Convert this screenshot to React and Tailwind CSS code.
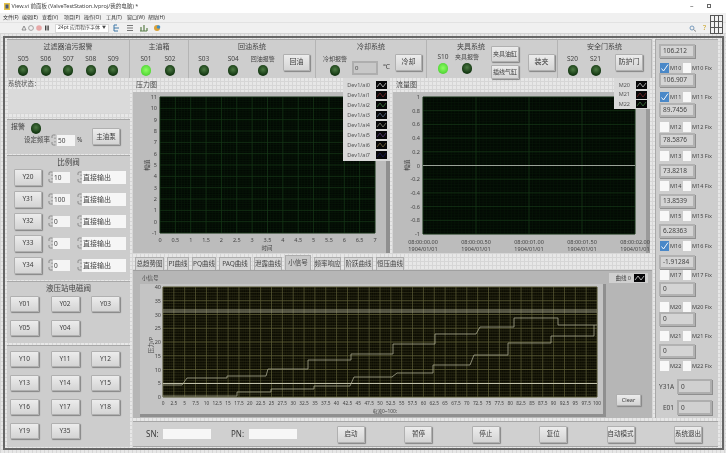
const R = (a, b, s = 1) => { const o = []; for (let i = 0; ; i++) { const v = a + i * s; if (v > b + 1e-6) break; o.push(v); } return o; };

const btn = "flex items-center justify-center shrink-0 rounded-[1px] border border-[#b0b0b0] bg-gradient-to-b from-[#ececec] to-[#d4d4d4] text-[#3a3a3a] shadow-[1px_1px_1px_#858585]";

function Btn({ children, cls = "w-[28px] h-[17px] text-[7px]" }) {
  return <div className={`${btn} ${cls}`}>{children}</div>;
}

function Led({ on }) {
  return on
    ? <div className="w-[10px] h-[11px] rounded-full bg-[radial-gradient(circle_at_50%_45%,#8dff62,#4fd334_75%)]" />
    : <div className="w-[10px] h-[11px] rounded-full bg-[radial-gradient(circle_at_50%_40%,#4d7a44,#163a14_65%,#0f2a0e)]" />;
}

function Cell({ label, on, w }) {
  return (
    <div className={`flex flex-col items-center shrink-0 ${w}`}>
      <div className={`h-[12px] leading-[12px] text-[#444] whitespace-nowrap ${label.startsWith("S") ? "text-[6.5px]" : "text-[6px]"}`}>{label}</div>
      <Led on={on} />
    </div>
  );
}

function Group({ title, w, children }) {
  return (
    <div className={`${w} shrink-0 h-full bg-[#cecece] border-t border-[#a8a8a8] border-r border-r-[#b4b4b4] flex flex-col`}>
      <div className="h-[13px] text-[7px] leading-[13px] text-center text-[#444]">{title}</div>
      <div className="flex items-start">{children}</div>
    </div>
  );
}

function Spin() {
  return (
    <svg width="5" height="12" viewBox="0 0 5 12" className="shrink-0">
      <path d="M1 4 V2 Q1 1 2.5 1 H4.5 M1 8 V10 Q1 11 2.5 11 H4.5 M4 3.5 V5 M4 7 V8.5" stroke="#8a8a8a" fill="none" strokeWidth="1" />
    </svg>
  );
}

function ValveRow({ name, val }) {
  return (
    <div className="flex items-center h-[22px] pl-[7px]">
      <Btn cls="w-[28px] h-[17px] text-[6.5px]">{name}</Btn>
      <div className="ml-[6px]"><Spin /></div>
      <div className="w-[17px] h-[11px] bg-[#f4f4f4] text-[6.5px] leading-[11px] pl-[1px] text-[#444]">{val}</div>
      <div className="ml-[7px]"><Spin /></div>
      <div className="w-[44px] h-[13px] bg-[#f6f6f6] text-[7px] leading-[13px] pl-[1px] text-[#444]">直接输出</div>
    </div>
  );
}

function LeftColumn() {
  const b = "w-[29px] h-[16px] text-[6.5px]";
  const row = "flex gap-[11.5px] pl-[3px]";
  return (
    <div className="row-span-2 flex flex-col h-full">
      <div className="h-[41px] shrink-0 pl-[1px]">
        <div className="h-[10px] mt-[1px] text-[6.5px] leading-[10px] text-[#555]">系统状态：</div>
        <div className="h-[24px] w-[122px] bg-[#dadada]" />
      </div>
      <div className="h-[35px] shrink-0 bg-[#cdcdcd] border-t border-[#a8a8a8] flex flex-col relative">
        <div className="flex items-center pl-[4px] pt-[1px] h-[14px]">
          <span className="text-[7px] text-[#444] w-[20px]">报警</span>
          <div className="mt-[1px]"><Led /></div>
        </div>
        <div className="flex items-center pl-[17px]">
          <span className="text-[6.5px] text-[#444] w-[27px] whitespace-nowrap">设定频率</span>
          <Spin />
          <div className="w-[18px] h-[11px] ml-[1px] bg-[#f4f4f4] text-[6.5px] leading-[11px] pl-[1px] text-[#444]">50</div>
          <span className="text-[6.5px] text-[#444] ml-[2px]">%</span>
        </div>
        <div className="absolute left-[85px] top-[8px]"><Btn cls="w-[28px] h-[17px] text-[6.5px]">主油泵</Btn></div>
      </div>
      <div className="h-[125px] mt-[1px] shrink-0 bg-[#cdcdcd] border-t border-[#a8a8a8] flex flex-col">
        <div className="h-[10px] text-[7.5px] leading-[13px] text-center text-[#444]">比例阀</div>
        {[["Y20", "10"], ["Y31", "100"], ["Y32", "0"], ["Y33", "0"], ["Y34", "0"]].map(([n, v]) => <ValveRow key={n} name={n} val={v} />)}
      </div>
      <div className="h-[62px] mt-[1px] shrink-0 bg-[#cdcdcd] border-t border-[#a8a8a8] flex flex-col">
        <div className="h-[14px] text-[7.5px] leading-[12px] text-center text-[#444]">液压站电磁阀</div>
        <div className={row}><Btn cls={b}>Y01</Btn><Btn cls={b}>Y02</Btn><Btn cls={b}>Y03</Btn></div>
        <div className={`${row} mt-[8px]`}><Btn cls={b}>Y05</Btn><Btn cls={b}>Y04</Btn></div>
      </div>
      <div className="flex-1 mt-[2px] bg-[#cdcdcd] border-t border-[#a8a8a8] flex flex-col gap-[8px] pt-[5px]">
        <div className={row}><Btn cls={b}>Y10</Btn><Btn cls={b}>Y11</Btn><Btn cls={b}>Y12</Btn></div>
        <div className={row}><Btn cls={b}>Y13</Btn><Btn cls={b}>Y14</Btn><Btn cls={b}>Y15</Btn></div>
        <div className={row}><Btn cls={b}>Y16</Btn><Btn cls={b}>Y17</Btn><Btn cls={b}>Y18</Btn></div>
        <div className={row}><Btn cls={b}>Y19</Btn><Btn cls={b}>Y35</Btn></div>
      </div>
    </div>
  );
}

function TopBar() {
  return (
    <div className="col-span-2 flex h-full items-stretch">
      <Group title="过滤器油污报警" w="w-[123px]">
        <div className="flex pl-[5px]">
          {["S05", "S06", "S07", "S08", "S09"].map(s => <Cell key={s} label={s} w="w-[22.5px]" />)}
        </div>
      </Group>
      <Group title="主油箱" w="w-[59px]">
        <div className="flex pl-[4px]">
          <Cell label="S01" on w="w-[24px]" />
          <Cell label="S02" w="w-[24px]" />
        </div>
      </Group>
      <Group title="回油系统" w="w-[127px]">
        <Cell label="S03" w="w-[29.5px]" />
        <Cell label="S04" w="w-[29.5px]" />
        <Cell label="回油报警" w="w-[29.5px]" />
        <div className="ml-[5.5px] mt-[1px]"><Btn cls="w-[27px] h-[17px] text-[7px]">回油</Btn></div>
      </Group>
      <Group title="冷却系统" w="w-[111px]">
        <div className="pl-[5px]"><Cell label="冷却报警" w="w-[28px]" /></div>
        <div className="ml-[3px] mt-[8px] w-[26px] h-[14px] bg-[#c8c8c8] border-2 border-[#aeaeae] text-[6px] leading-[10px] pl-[1px] text-[#444]">0</div>
        <div className="w-[17px] mt-[9px] text-[7px] text-center text-[#444]">℃</div>
        <div className="mt-[1px]"><Btn cls="w-[27px] h-[17px] text-[7px]">冷却</Btn></div>
      </Group>
      <div className="w-[131px] shrink-0 h-full bg-[#cecece] border-t border-[#a8a8a8] border-r border-r-[#b4b4b4] flex">
        <div className="w-[64px] shrink-0 flex flex-col">
          <div className="h-[11px] pl-[30px] text-[7px] leading-[13px] text-[#444] whitespace-nowrap">夹具系统</div>
          <div className="flex pl-[4px]">
            <Cell label="S10" on w="w-[24px]" />
            <Cell label="夹具报警" w="w-[24px]" />
          </div>
        </div>
        <div className="flex flex-col gap-[3px] pt-[6px] w-[28px] shrink-0">
          <Btn cls="w-[28px] h-[16px] text-[6px]">夹具油缸</Btn>
          <Btn cls="w-[28px] h-[14px] text-[6px]">插线气缸</Btn>
        </div>
        <div className="ml-[9px] mt-[14px]"><Btn cls="w-[27px] h-[17px] text-[7px]">装夹</Btn></div>
      </div>
      <Group title="安全门系统" w="w-[94px]">
        <div className="flex pl-[3px]">
          <Cell label="S20" w="w-[23px]" />
          <Cell label="S21" w="w-[23px]" />
        </div>
        <div className="ml-[8px] mt-[1px]"><Btn cls="w-[28px] h-[17px] text-[7px]">防护门</Btn></div>
      </Group>
    </div>
  );
}

function Wave({ color }) {
  return (
    <svg width="11" height="8" viewBox="0 0 11 8" className="shrink-0">
      <rect width="11" height="8" fill="#060608" />
      <path d="M1 6 L4 2 L7 6 L10 2" stroke={color} strokeWidth="0.8" fill="none" />
    </svg>
  );
}

function Legend({ items, cls, rowCls }) {
  return (
    <div className={`absolute top-0 bg-[#d9d9d9] flex flex-col pt-[2px] ${cls}`}>
      {items.map(([n, c]) => (
        <div key={n} className={`flex items-center h-[10px] justify-end pr-[3px] gap-[6px] text-[5.5px] text-[#555] ${rowCls}`}>
          <span>{n}</span>
          <Wave color={c} />
        </div>
      ))}
    </div>
  );
}

const ft = { fontSize: 5.5, fill: "#444" };
const ft3 = { fontSize: 4.8, fill: "#444" };

function PressureChart() {
  const [l, r, t, b] = [160, 375, 97, 233];
  const X = v => l + ((r - l) * v) / 7;
  const Y = v => b - ((b - t) * (v + 1)) / 12;
  return (
    <svg width="257" height="161" viewBox="133 92 257 161" className="block bg-[#bcbcbc]">
      <rect x="386" y="92" width="4" height="161" fill="#8f8f8f" />
      <rect x={l} y={t} width={r - l} height={b - t} fill="#030a04" />
      {R(l, r, (r - l) / 70).map(x => <line key={x} x1={x} x2={x} y1={t} y2={b} stroke="#0a1a0b" strokeWidth=".5" />)}
      {R(t, b, (b - t) / 60).map(y => <line key={y} y1={y} y2={y} x1={l} x2={r} stroke="#0a1a0b" strokeWidth=".5" />)}
      {R(0, 7, 0.5).map(v => <line key={v} x1={X(v)} x2={X(v)} y1={t} y2={b} stroke="#173a18" strokeWidth=".7" />)}
      {R(-1, 11).map(v => <line key={v} y1={Y(v)} y2={Y(v)} x1={l} x2={r} stroke="#173a18" strokeWidth=".7" />)}
      {R(-1, 11).map(v => <text key={v} x={l - 3} y={Y(v) + 2} textAnchor="end" {...ft}>{v}</text>)}
      {R(0, 7, 0.5).map(v => <text key={v} x={X(v)} y={b + 9} textAnchor="middle" {...ft}>{v}</text>)}
      <text x="267" y="250" textAnchor="middle" {...ft}>时间</text>
      <text transform="translate(149 165) rotate(-90)" textAnchor="middle" {...ft}>幅值</text>
    </svg>
  );
}

function FlowChart() {
  const [l, r, t, b] = [423, 635, 97, 234];
  const Y = v => b - ((b - t) * (v + 1)) / 2;
  const xs = ["0.00", "0.50", "1.00", "1.50", "2.00"];
  const ys = [1, 0.8, 0.6, 0.4, 0.2, 0, -0.2, -0.4, -0.6, -0.8, -1];
  return (
    <svg width="257" height="161" viewBox="393 92 257 161" className="block bg-[#bcbcbc]">
      <rect x="646" y="92" width="4" height="161" fill="#9a9a9a" />
      <rect x={l} y={t} width={r - l} height={b - t} fill="#030a04" />
      {R(l, r, (r - l) / 60).map(x => <line key={x} x1={x} x2={x} y1={t} y2={b} stroke="#0a1a0b" strokeWidth=".5" />)}
      {R(t, b, (b - t) / 50).map(y => <line key={y} y1={y} y2={y} x1={l} x2={r} stroke="#0a1a0b" strokeWidth=".5" />)}
      {xs.map((_, i) => <line key={i} x1={l + i * 53} x2={l + i * 53} y1={t} y2={b} stroke="#173a18" strokeWidth=".7" />)}
      {ys.map(v => <line key={v} y1={Y(v)} y2={Y(v)} x1={l} x2={r} stroke="#173a18" strokeWidth=".7" />)}
      <line x1={l} x2={r} y1={Y(0)} y2={Y(0)} stroke="#9aa398" strokeWidth="1" />
      {ys.map(v => <text key={v} x={l - 3} y={Y(v) + 2} textAnchor="end" {...ft}>{v}</text>)}
      {xs.map((s, i) => (
        <g key={s}>
          <text x={l + i * 53} y={b + 10} textAnchor="middle" {...ft}>{`08:00:0${s}`}</text>
          <text x={l + i * 53} y={b + 17} textAnchor="middle" {...ft}>1904/01/01</text>
        </g>
      ))}
      <text transform="translate(409 165) rotate(-90)" textAnchor="middle" {...ft}>幅值</text>
    </svg>
  );
}

function SignalChart() {
  const [l, r, t, b] = [163, 597, 285, 395];
  const a = "163,383 182,383 187,376 227,376 227,374 266,374 268,367 308,367 308,358 351,358 351,352 393,352 393,342 435,342 435,332 476,332 480,325 514,325 514,316 558,316 558,323 597,323";
  const c = "163,394 237,394 237,390 271,390 271,387 314,387 314,384 350,384 354,375 392,375 397,371 433,371 433,363 470,363 474,353 508,353 508,341 551,341 551,334 594,334 594,323";
  return (
    <svg width="466" height="133" viewBox="140 282 466 133" className="block bg-[#c4c4c4]">
      <rect x="140" y="412" width="466" height="3" fill="#8f8f8f" />
      <rect x="603" y="282" width="3" height="133" fill="#8f8f8f" />
      <rect x={l} y={t} width={r - l} height={b - t} fill="#0c0c03" />
      {R(0, 200).map(i => <line key={i} x1={l + i * 2.17} x2={l + i * 2.17} y1={t} y2={b} stroke="#1e1e0c" strokeWidth=".5" />)}
      {R(0, 40).map(i => <line key={i} y1={t + i * 2.75} y2={t + i * 2.75} x1={l} x2={r} stroke="#3d3d22" strokeWidth=".5" />)}
      {R(0, 40).map(i => <line key={i} x1={l + i * 10.85} x2={l + i * 10.85} y1={t} y2={b} stroke="#5e5e38" strokeWidth=".7" />)}
      {R(0, 8).map(i => <line key={i} y1={t + i * 13.75} y2={t + i * 13.75} x1={l} x2={r} stroke="#5e5e38" strokeWidth=".7" />)}
      <g fill="none" stroke="#a8a890" strokeWidth=".8">
        <line x1={l} x2={r} y1="308" y2="308" stroke="#b5b5a0" />
        <line x1={l} x2={r} y1="310" y2="310" stroke="#b5b5a0" />
        <line x1={l} x2={r} y1="381.5" y2="381.5" strokeWidth="1.1" stroke="#c0c0aa" />
        <polyline points={a} />
        <polyline points={c} />
      </g>
      {R(0, 8).map(i => <text key={i} x={l - 2} y={b - i * 13.75 + 2} textAnchor="end" {...ft}>{i * 5}</text>)}
      {R(0, 40).map(i => <text key={i} x={l + i * 10.85} y={b + 8} textAnchor="middle" {...ft3}>{i * 2.5}</text>)}
      <text x="397" y="411" textAnchor="end" {...ft3}>电流0~100:</text>
      <text transform="translate(153 343) rotate(-90)" textAnchor="middle" {...ft}>压力/P</text>
    </svg>
  );
}

function Tabs() {
  const tabs = [["总趋势图", "w-[29px]"], ["PI曲线", "w-[22px]"], ["PQ曲线", "w-[24px]"], ["PAQ曲线", "w-[32px]"], ["泄露曲线", "w-[28px]"], ["小信号", "w-[26px]", 1], ["频率响应", "w-[27px]"], ["阶跃曲线", "w-[29px]"], ["恒压曲线", "w-[28px]"]];
  return (
    <div className="flex items-end gap-[3px] h-[15px] pl-[2px] mt-[2px]">
      {tabs.map(([n, w, on]) => (
        <div key={n} className={`${w} shrink-0 flex items-center justify-center text-[6.5px] whitespace-nowrap text-[#444] border border-b-0 border-[#adadad] ${on ? "h-[15px] bg-[#c8c8c8]" : "h-[13px] bg-[#d6d6d6]"}`}>{n}</div>
      ))}
    </div>
  );
}

function Center() {
  return (
    <div className="flex flex-col pl-[3px] w-[525px] h-full">
      <div className="flex gap-[3px] h-[175px] shrink-0">
        <div className="relative w-[257px] h-full">
          <div className="h-[14px] pl-[3px] text-[7px] leading-[14px] text-[#444]">压力图</div>
          <PressureChart />
          <Legend cls="right-0 w-[47px] h-[83px]" items={[["Dev1/ai0", "#c8c8c8"], ["Dev1/ai1", "#7a2a2a"], ["Dev1/ai2", "#3f7a3f"], ["Dev1/ai3", "#5b6d8a"], ["Dev1/ai4", "#8a8a7a"], ["Dev1/ai5", "#5a3f7a"], ["Dev1/ai6", "#7a6a3f"], ["Dev1/ai7", "#1a1a55"]]} />
        </div>
        <div className="relative w-[257px] h-full">
          <div className="h-[14px] pl-[3px] text-[7px] leading-[14px] text-[#444]">流量图</div>
          <FlowChart />
          <Legend cls="right-0 w-[36px] h-[31px]" items={[["M20", "#c8c8c8"], ["M21", "#7a2a2a"], ["M22", "#3f7a3f"]]} />
        </div>
      </div>
      <Tabs />
      <div className="w-[519px] h-[150px] bg-[#b6b6b6] border-t border-[#a0a0a0] relative pl-[7px]">
        <div className="h-[13px] text-[5.5px] leading-[14px] pl-[2px] text-[#444]">小信号</div>
        <SignalChart />
        <div className="absolute left-[476px] top-[2px] w-[39px] h-[10px] flex items-center justify-end gap-[3px] pr-[3px] bg-[#d0d0d0] text-[5.5px] text-[#444]">
          <span>曲线 0</span><Wave color="#d8d8d8" />
        </div>
        <div className="absolute left-[483px] top-[123px]"><Btn cls="w-[25px] h-[12px] text-[5.5px]">Clear</Btn></div>
      </div>
    </div>
  );
}

function Check({ on }) {
  return on ? (
    <svg width="9" height="10" viewBox="0 0 9 10" className="shrink-0">
      <rect width="9" height="10" fill="#4a88c8" />
      <path d="M1.5 5.5 L3.5 8 L8 1.5" stroke="#f2f6fb" strokeWidth="1" fill="none" />
    </svg>
  ) : <div className="w-[9px] h-[10px] bg-[#f8f8f8] shrink-0" />;
}

function RightColumn() {
  const rows = [
    ["106.212", "M10", 1, "mt-[4px]", "mt-[5px]"],
    ["106.907", "M11", 1, "mt-0", "mt-[5px]"],
    ["89.7456", "M12", 0, "mt-[1px]", "mt-[5px]"],
    ["78.5876", "M13", 0, "mt-[1px]", "mt-[4px]"],
    ["73.8218", "M14", 0, "mt-[3px]", "mt-[3px]"],
    ["13.8539", "M15", 0, "mt-[3px]", "mt-[3px]"],
    ["6.28363", "M16", 1, "mt-[3px]", "mt-[3px]"],
    ["-1.91284", "M17", 0, "mt-[4px]", "mt-[1px]"],
    ["0", "M20", 0, "mt-[2px]", "mt-[6px]"],
    ["0", "M21", 0, "mt-0", "mt-[5px]"],
    ["0", "M22", 0, "mt-[3px]", "mt-[3px]"],
  ];
  return (
    <div className="row-span-2 bg-[#cdcdcd] border-t border-l border-[#a8a8a8] flex flex-col self-start w-[63px] h-[379px] pl-[3px] text-[#444]">
      {rows.map(([v, m, c, a, d]) => (
        <div key={m}>
          <div className={`${a} w-[36px] h-[14px] bg-[#d4d4d4] border-2 border-[#b2b2b2] shadow-[1px_1px_0_#8f8f8f] text-[6.5px] leading-[10px] pl-[2px] whitespace-nowrap`}>{v}</div>
          <div className={`${d} flex items-center h-[10px] pl-[1px] text-[5.5px] whitespace-nowrap`}>
            <Check on={c} />
            <span className="w-[14px] pl-[1px] shrink-0">{m}</span>
            <div className="w-[8px] h-[10px] bg-[#f8f8f8] shrink-0" />
            <span className="pl-[1px]">{m} Fix</span>
          </div>
        </div>
      ))}
      <div className="mt-[8px] flex items-center text-[6.5px]">
        <span className="w-[15px] text-right shrink-0">Y31A</span>
        <div className="ml-[3px] w-[35px] h-[15px] bg-[#d0d0d0] border-2 border-[#aeaeae] shadow-[1px_1px_0_#8f8f8f] leading-[11px] pl-[2px]">0</div>
      </div>
      <div className="mt-[6px] flex items-center text-[6.5px]">
        <span className="w-[15px] text-right shrink-0">E01</span>
        <div className="ml-[3px] w-[35px] h-[15px] bg-[#d0d0d0] border-2 border-[#aeaeae] shadow-[1px_1px_0_#8f8f8f] leading-[11px] pl-[2px]">0</div>
      </div>
    </div>
  );
}

function BottomBar() {
  const b = "w-[28px] h-[17px] text-[6.5px]";
  return (
    <div className="col-span-2 ml-[3px] mt-[3px] h-[26px] bg-[#d0d0d0] border-t border-[#a6a6a6] border-b border-b-[#a6a6a6] flex items-center pl-[13px] text-[#3a3a3a]">
      <span className="w-[17px] text-[8px] shrink-0">SN:</span>
      <div className="w-[48px] h-[10px] bg-[#f7f7f7] shrink-0" />
      <span className="ml-[20px] w-[18px] text-[8px] shrink-0">PN:</span>
      <div className="w-[48px] h-[10px] bg-[#f7f7f7] shrink-0" />
      <div className="ml-[40px] flex gap-[39.4px]">
        {["启动", "暂停", "停止", "复位", "自动模式", "系统退出"].map(t => <Btn key={t} cls={b}>{t}</Btn>)}
      </div>
    </div>
  );
}

function Toolbar() {
  return (
    <div className="h-[11px] bg-[#f0f0f0] flex items-center shrink-0 relative border-t border-[#e2e2e2]">
      <svg width="30" height="8" viewBox="0 0 30 8" className="ml-[21px] shrink-0">
        <path d="M1 2 L5 4 L1 6 Z" transform="rotate(-90 3 4)" fill="none" stroke="#777" strokeWidth=".8" />
        <circle cx="10" cy="4" r="2.4" fill="none" stroke="#999" strokeWidth=".9" />
        <circle cx="18" cy="4" r="2.8" fill="#e8a8a8" />
        <rect x="24" y="1.5" width="1.4" height="5" fill="#444" />
        <rect x="26.4" y="1.5" width="1.4" height="5" fill="#444" />
      </svg>
      <div className="ml-[4px] w-[54px] h-[9px] bg-white border border-[#d8d8d8] flex items-center justify-between px-[2px] text-[5px] text-[#444] whitespace-nowrap">
        <span>24pt 应用程序字体</span><span className="text-[4px]">▼</span>
      </div>
      <svg width="50" height="8" viewBox="0 0 50 8" className="ml-[4px] shrink-0">
        <path d="M1 1 V7 M1 1 H4 M1 4 H6 M1 7 H5" stroke="#3f78a8" strokeWidth="1" />
        <path d="M14 1.5 H20 M14 4 H20 M14 6.5 H20" stroke="#777" strokeWidth="1" />
        <path d="M27 7 H34 M28 7 V3 M31 7 V1 M34 7 V4" stroke="#5b7f4a" strokeWidth="1.2" />
        <circle cx="44" cy="4" r="3" fill="#d9a23a" />
        <circle cx="45.5" cy="3" r="1.8" fill="#3f8fc8" />
      </svg>
      <svg width="12" height="7" viewBox="0 0 12 7" className="absolute left-[688px] top-[2px]">
        <circle cx="4" cy="3" r="2" fill="none" stroke="#6d93b8" strokeWidth=".9" />
        <path d="M5.5 4.5 L8 6.5" stroke="#8a8a8a" strokeWidth="1" />
      </svg>
      <div className="absolute left-[703px] top-[1px] text-[7px] leading-[8px] text-[#c8a21e]">?</div>
    </div>
  );
}

export default function App() {
  return (
    <div className="w-[726px] h-[453px] overflow-hidden bg-white flex flex-col relative font-['Noto_Sans','Noto_Sans_CJK_SC',sans-serif] blur-[0.4px]">
      <div className="h-[13px] flex items-center shrink-0 relative">
        <svg width="6" height="7" viewBox="0 0 6 7" className="ml-[4px] shrink-0">
          <rect width="6" height="7" fill="#e6c34a" />
          <rect x="1.5" y="1.5" width="3" height="4" fill="#4a5a7a" />
        </svg>
        <span className="ml-[1.5px] text-[5.5px] text-[#444] whitespace-nowrap">View.vi 前面板 (ValveTestStation.lvproj/我的电脑) *</span>
        <span className="absolute left-[690px] top-[1px] text-[7px] text-[#555]">–</span>
        <span className="absolute left-[707px] top-[4px] w-[4px] h-[4px] border border-[#666]" />
      </div>
      <div className="h-[9px] bg-[#f0f0f0] flex items-center shrink-0 text-[5px] text-[#333] whitespace-nowrap">
        <span className="ml-[3px] w-[19px]">文件(F)</span>
        <span className="w-[20px]">编辑(E)</span>
        <span className="w-[22px]">查看(V)</span>
        <span className="w-[20px]">项目(P)</span>
        <span className="w-[22px]">操作(O)</span>
        <span className="w-[21px]">工具(T)</span>
        <span className="w-[21px]">窗口(W)</span>
        <span>帮助(H)</span>
      </div>
      <Toolbar />
      <div className="flex-1 relative bg-[#e7e7e7] bg-[linear-gradient(#d6d6d6_1px,transparent_1px),linear-gradient(90deg,#d6d6d6_1px,transparent_1px)] bg-[size:4px_4px] pt-[3px]">
        <div className="ml-[3px] w-[721px] h-[414px] border-2 border-[#666] pt-[1px] pl-[2px]">
          <div className="grid grid-cols-[123px_525px_63px] grid-rows-[39px_340px_29px] w-[711px]">
            <TopBar />
            <RightColumn />
            <LeftColumn />
            <Center />
            <BottomBar />
          </div>
        </div>
      </div>
      <svg width="13" height="19" viewBox="0 0 13 19" className="absolute left-[710px] top-[15px]">
        <rect x=".5" y=".5" width="12" height="18" fill="#f2f2f2" stroke="#555" />
        <path d="M4.5 0 V19 M8.5 0 V19 M0 6.5 H13 M0 12.5 H13" stroke="#555" strokeWidth="1" />
      </svg>
    </div>
  );
}
